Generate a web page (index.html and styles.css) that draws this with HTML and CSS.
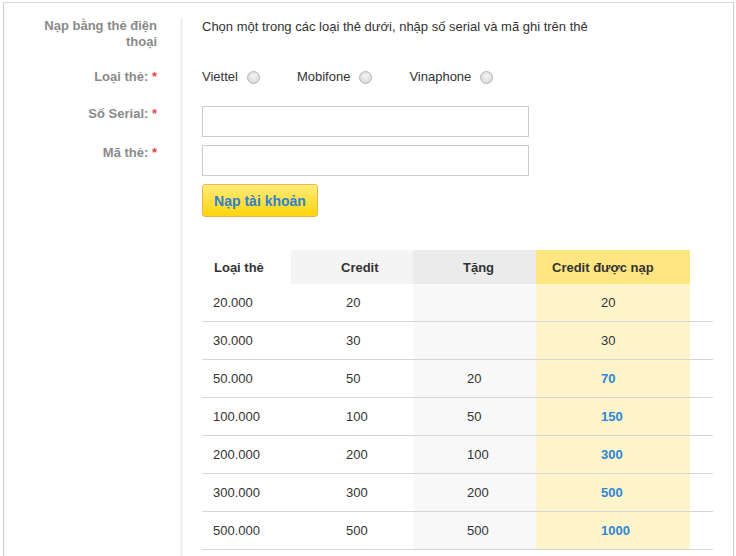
FILE: index.html
```html
<!DOCTYPE html>
<html lang="vi">
<head>
<meta charset="utf-8">
<title>Nạp bằng thẻ điện thoại</title>
<link rel="stylesheet" href="styles.css">
</head>
<body>
<div class="panel">
  <div class="form">
    <div class="lbl lbl-title">Nạp bằng thẻ điện thoại</div>
    <div class="cell cell-intro">Chọn một trong các loại thẻ dưới, nhập số serial và mã ghi trên thẻ</div>

    <div class="lbl lbl-type">Loại thẻ: <span class="req">*</span></div>
    <div class="cell cell-radios">
      <span class="opt">Viettel <span class="radio"></span></span>
      <span class="opt">Mobifone <span class="radio"></span></span>
      <span class="opt">Vinaphone <span class="radio"></span></span>
    </div>

    <div class="lbl lbl-input">Số Serial: <span class="req">*</span></div>
    <div class="cell cell-input"><input class="txt" type="text"></div>

    <div class="lbl lbl-input">Mã thẻ: <span class="req">*</span></div>
    <div class="cell cell-input"><input class="txt" type="text"></div>

    <div class="lbl"></div>
    <div class="cell cell-btn"><button class="btn" type="button">Nạp tài khoản</button></div>

    <div class="lbl"></div>
    <div class="cell cell-table">
      <table class="rates">
        <colgroup>
          <col class="w1"><col class="w2"><col class="w3"><col class="w4"><col class="w5">
        </colgroup>
        <thead>
          <tr>
            <th class="c1">Loại thẻ</th>
            <th class="c2">Credit</th>
            <th class="c3">Tặng</th>
            <th class="c4">Credit được nạp</th>
            <th class="c5"></th>
          </tr>
        </thead>
        <tbody>
          <tr><td class="c1">20.000</td><td class="c2">20</td><td class="c3"></td><td class="c4">20</td><td class="c5"></td></tr>
          <tr><td class="c1">30.000</td><td class="c2">30</td><td class="c3"></td><td class="c4">30</td><td class="c5"></td></tr>
          <tr><td class="c1">50.000</td><td class="c2">50</td><td class="c3">20</td><td class="c4 hi">70</td><td class="c5"></td></tr>
          <tr><td class="c1">100.000</td><td class="c2">100</td><td class="c3">50</td><td class="c4 hi">150</td><td class="c5"></td></tr>
          <tr><td class="c1">200.000</td><td class="c2">200</td><td class="c3">100</td><td class="c4 hi">300</td><td class="c5"></td></tr>
          <tr><td class="c1">300.000</td><td class="c2">300</td><td class="c3">200</td><td class="c4 hi">500</td><td class="c5"></td></tr>
          <tr><td class="c1">500.000</td><td class="c2">500</td><td class="c3">500</td><td class="c4 hi">1000</td><td class="c5"></td></tr>
        </tbody>
      </table>
    </div>
  </div>
</div>
</body>
</html>
```
FILE: styles.css
```css
html, body {
  margin: 0;
  padding: 0;
  background: #fff;
  overflow: hidden;
}
body {
  font-family: "Liberation Sans", Arial, sans-serif;
  font-size: 13px;
  color: #333;
}
.panel {
  margin: 2px 0 0 3px;
  width: 731px;
  height: 554px;
  border-top: 1px solid #d9d9d9;
  border-left: 1px solid #cfcfcf;
  border-right: 1px solid #cfcfcf;
  padding-top: 15px;
  box-sizing: border-box;
}
.form {
  display: grid;
  grid-template-columns: 176px 1fr;
}
.lbl {
  text-align: right;
  padding-right: 23px;
  font-weight: bold;
  color: #8a8a8a;
  line-height: 16px;
}
.lbl-title { padding-left: 30px; }
.lbl-type { padding-top: 1px; }
.lbl-input { padding-top: 1px; }
.req { color: #e64545; }
.cell {
  border-left: 3px solid #f2f2f2;
  padding-left: 19px;
}
.cell-intro {
  line-height: 18px;
  padding-bottom: 32px;
}
.cell-radios {
  line-height: 18px;
  padding-bottom: 19px;
  display: flex;
  align-items: center;
}
.opt {
  display: inline-flex;
  align-items: center;
  margin-right: 37px;
}
.radio {
  display: inline-block;
  width: 11px;
  height: 11px;
  margin-left: 9px;
  border-radius: 50%;
  border: 1px solid #b4b4b4;
  background: radial-gradient(circle at 50% 40%, #f4f4f4 0%, #e2e2e2 55%, #cfcfcf 100%);
}
.cell-input {
  padding-top: 1px;
  padding-bottom: 7px;
}
.txt {
  display: block;
  width: 327px;
  height: 31px;
  box-sizing: border-box;
  border: 1px solid #cccccc;
  margin: 0;
  padding: 0 6px;
  background: #fff;
  font: inherit;
}
.cell-btn {
  padding-top: 1px;
  padding-bottom: 33px;
}
.btn {
  display: block;
  width: 116px;
  height: 33px;
  margin: 0;
  padding: 0;
  border: 1px solid #ecb552;
  border-radius: 3px;
  background: linear-gradient(#ffeb7a, #ffd50c);
  color: #2e80d2;
  font-family: "Liberation Sans", Arial, sans-serif;
  font-size: 14px;
  font-weight: bold;
}
.cell-table {
  padding-bottom: 20px;
}
.rates {
  border-collapse: collapse;
  width: 511px;
  table-layout: fixed;
}
.rates .w1 { width: 89px; }
.rates .w2 { width: 122px; }
.rates .w3 { width: 123px; }
.rates .w4 { width: 154px; }
.rates .w5 { width: 23px; }
.rates th, .rates td {
  padding: 0;
  text-align: left;
  white-space: nowrap;
}
.rates th {
  height: 34px;
  font-weight: bold;
  color: #333;
}
.rates td {
  height: 37px;
  border-bottom: 1px solid #d6d6d6;
  color: #333;
}
.rates th.c1 { padding-left: 12px; }
.rates th.c2 { padding-left: 50px; background: #f4f4f4; }
.rates th.c3 { padding-left: 50px; background: #ebebeb; }
.rates th.c4 { padding-left: 16px; background: #ffe680; }
.rates td.c1 { padding-left: 11px; }
.rates td.c2 { padding-left: 55px; }
.rates td.c3 { padding-left: 54px; background: #f8f8f8; }
.rates td.c4 { padding-left: 65px; background: #fdf4cc; }
.rates td.hi { color: #2f86d4; font-weight: bold; }
```
